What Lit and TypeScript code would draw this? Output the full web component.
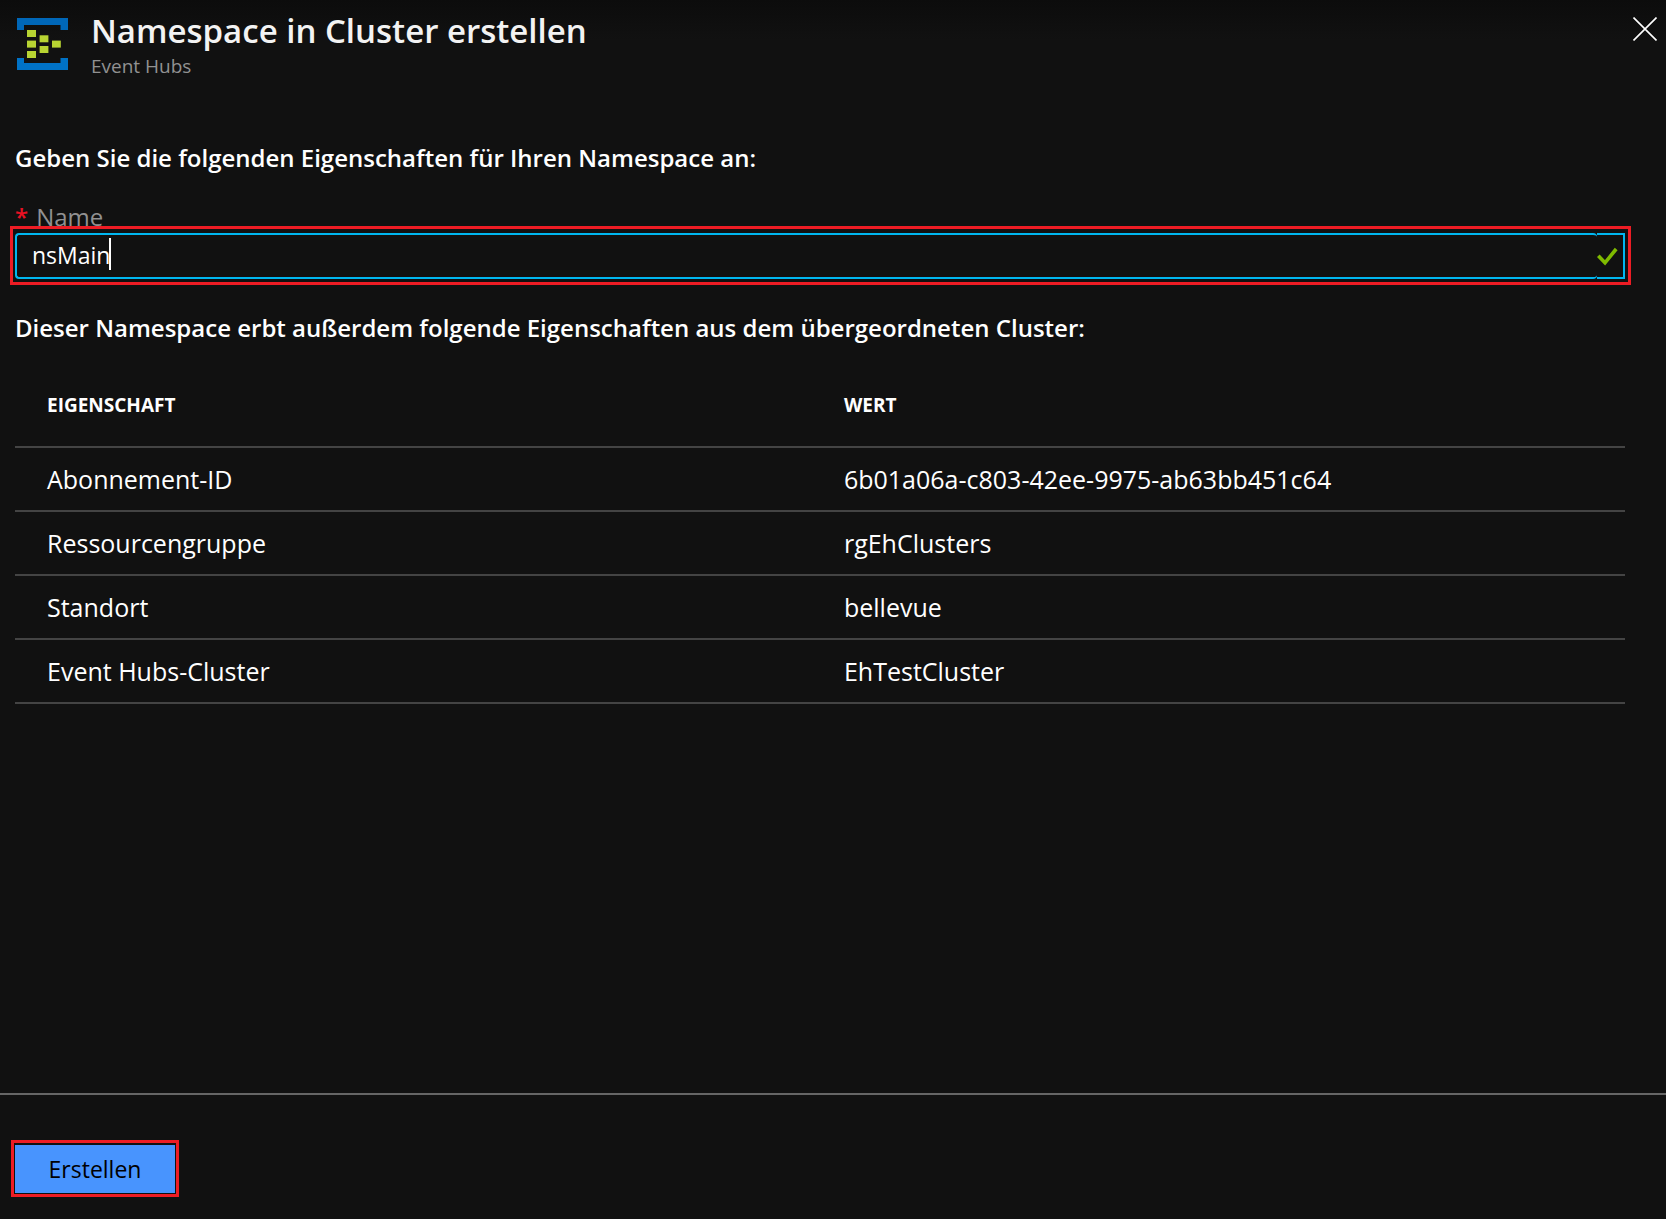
import { LitElement, html, css } from "lit";
import { customElement, state } from "lit/decorators.js";

interface Property {
  label: string;
  value: string;
}

const INHERITED: Property[] = [
  { label: "Abonnement-ID", value: "6b01a06a-c803-42ee-9975-ab63bb451c64" },
  { label: "Ressourcengruppe", value: "rgEhClusters" },
  { label: "Standort", value: "bellevue" },
  { label: "Event Hubs-Cluster", value: "EhTestCluster" },
];

@customElement("blade-header")
class BladeHeader extends LitElement {
  static styles = css`
    :host {
      display: flex;
      align-items: flex-start;
      gap: 23px;
      padding: 8px 5px 0 17px;
      background: linear-gradient(#0c0c0c, #111 40px);
    }
    .logo {
      flex: none;
      margin-top: 10px;
    }
    .titles {
      flex: 1;
    }
    h1 {
      margin: 0;
      font-size: 33px;
      font-weight: 600;
      line-height: 46px;
      color: #f3f3f3;
    }
    p {
      margin: 0;
      font-size: 19px;
      line-height: 24px;
      color: #919191;
    }
    .close {
      display: flex;
      margin: 5px 0 0;
      padding: 4px;
      border: 0;
      background: none;
      color: #fff;
      cursor: pointer;
    }
  `;

  render() {
    return html`
      <svg class="logo" width="51" height="52" viewBox="0 0 51 52" aria-hidden="true">
        <path fill="#0067b8" d="M0 0H51V12H43.5V7H7V12H0Z" />
        <path fill="#0072c6" d="M0 40H7V45H43.5V40H51V52H0Z" />
        <g fill="#b8d432">
          <rect x="10" y="12" width="9" height="7" />
          <rect x="10" y="22.6" width="9" height="7" />
          <rect x="10" y="33" width="9" height="7" />
          <rect x="22.6" y="17.3" width="8.8" height="7" />
          <rect x="22.6" y="28" width="8.8" height="7" />
          <rect x="35" y="22.6" width="8.8" height="7" />
        </g>
      </svg>
      <div class="titles">
        <h1>Namespace in Cluster erstellen</h1>
        <p>Event Hubs</p>
      </div>
      <button class="close" type="button" aria-label="Schließen">
        <svg width="24" height="24" viewBox="0 0 24 24" fill="none" stroke="currentColor" stroke-width="1.6">
          <path d="M0.5 0.5L23.5 23.5M23.5 0.5L0.5 23.5" />
        </svg>
      </button>
    `;
  }
}

@customElement("name-field")
class NameField extends LitElement {
  static styles = css`
    :host {
      display: block;
    }
    label {
      display: flex;
      gap: 8px;
      font-size: 24px;
      line-height: 32px;
      color: #919191;
    }
    .required {
      color: #e81123;
      font-weight: 600;
    }
    .box {
      position: relative;
      display: flex;
      height: 46px;
    }
    .marker {
      position: absolute;
      inset: -7px -6px -6px -5px;
      border: 3px solid #ed1c24;
      background: #111;
    }
    input {
      position: relative;
      flex: 1;
      min-width: 0;
      box-sizing: border-box;
      padding: 0 15px 2px;
      border: 2px solid #00b7f0;
      border-right: 0;
      border-radius: 4px;
      outline: 0;
      background: none;
      color: #fff;
      caret-color: transparent;
      font: inherit;
      font-size: 23px;
    }
    .valid {
      position: relative;
      display: flex;
      align-items: center;
      box-sizing: border-box;
      width: 28px;
      border: 2px solid #00b7f0;
      border-left: 0;
    }
    .caret {
      position: absolute;
      left: 94px;
      top: 5px;
      width: 2px;
      height: 32px;
      background: #fff;
    }
  `;

  @state() private value = "nsMain";

  render() {
    return html`
      <label for="name"><span class="required">*</span>Name</label>
      <div class="box">
        <div class="marker"></div>
        <input
          id="name"
          type="text"
          required
          .value=${this.value}
          @input=${(e: InputEvent) => (this.value = (e.target as HTMLInputElement).value)}
        />
        <span class="valid">
          <svg width="22" height="20" viewBox="0 0 22 20" fill="none" stroke="#7fba00" stroke-width="3.6" aria-hidden="true">
            <path d="M1.3 9.8L8 16.8L19.2 3" />
          </svg>
        </span>
        <span class="caret"></span>
      </div>
    `;
  }
}

@customElement("property-table")
class PropertyTable extends LitElement {
  static styles = css`
    :host {
      display: block;
    }
    table {
      width: 100%;
      border-spacing: 0;
      table-layout: fixed;
    }
    th,
    td {
      border-bottom: 2px solid #444;
      text-align: left;
      color: #fff;
    }
    th {
      padding: 24px 0 28px 32px;
      font-size: 19px;
      font-weight: 700;
      line-height: 26px;
      text-transform: uppercase;
    }
    th:first-child {
      width: 49.5%;
      box-sizing: border-box;
    }
    td {
      padding: 15px 0 15px 32px;
      font-size: 25px;
      line-height: 32px;
    }
  `;

  render() {
    return html`
      <table>
        <thead>
          <tr>
            <th scope="col">Eigenschaft</th>
            <th scope="col">Wert</th>
          </tr>
        </thead>
        <tbody>
          ${INHERITED.map((p) => html`<tr><td>${p.label}</td><td>${p.value}</td></tr>`)}
        </tbody>
      </table>
    `;
  }
}

@customElement("app-root")
class AppRoot extends LitElement {
  static styles = css`
    :host {
      display: flex;
      flex-direction: column;
      box-sizing: border-box;
      min-height: 100vh;
      background: #111;
      color: #fff;
      font-family: "Open Sans", "Noto Sans", sans-serif;
    }
    main {
      flex: 1;
      padding: 64px 41px 32px 15px;
    }
    h2 {
      margin: 0;
      font-size: 24px;
      font-weight: 600;
      line-height: 32px;
    }
    name-field {
      margin: 27px 0 33px;
    }
    property-table {
      margin-top: 24px;
    }
    footer {
      display: flex;
      padding: 50px 15px 26px;
      border-top: 2px solid #666;
    }
    .create {
      position: relative;
      width: 160px;
      height: 48px;
      padding: 0;
      border: 0;
      background: #4894fe;
      color: #000;
      font: inherit;
      font-size: 23px;
      cursor: pointer;
    }
    .create::after {
      content: "";
      position: absolute;
      inset: -5px -4px -4px -4px;
      border: 3px solid #ed1c24;
    }
  `;

  render() {
    return html`
      <blade-header></blade-header>
      <main>
        <h2>Geben Sie die folgenden Eigenschaften für Ihren Namespace an:</h2>
        <name-field></name-field>
        <h2>Dieser Namespace erbt außerdem folgende Eigenschaften aus dem übergeordneten Cluster:</h2>
        <property-table></property-table>
      </main>
      <footer>
        <button class="create" type="button">Erstellen</button>
      </footer>
    `;
  }
}
